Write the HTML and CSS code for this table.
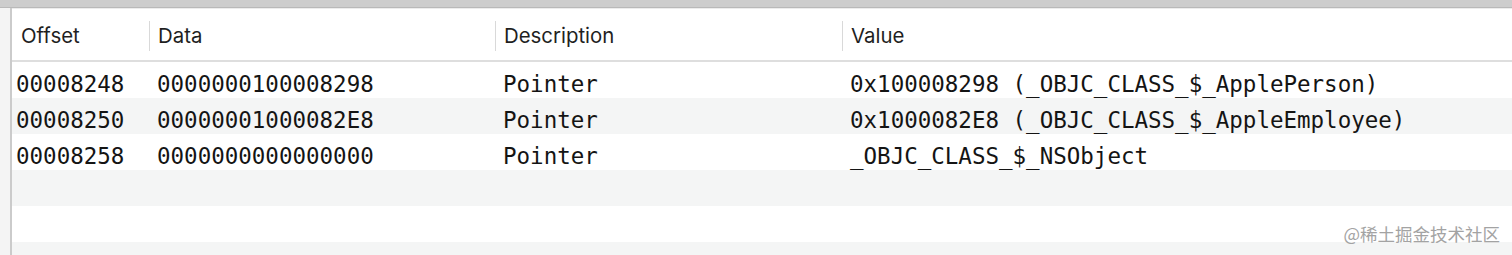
FILE: index.html
```html
<!DOCTYPE html>
<html>
<head>
<meta charset="utf-8">
<link rel="stylesheet" href="styles.css">
</head>
<body>
<div class="topbar"></div>
<div class="main">
  <div class="gutter"></div>
  <div class="table">
    <div class="head">
      <div class="hcell first">Offset</div>
      <div class="hcell">Data</div>
      <div class="hcell">Description</div>
      <div class="hcell">Value</div>
    </div>
    <div class="row">
      <div class="cell first">00008248</div>
      <div class="cell">0000000100008298</div>
      <div class="cell">Pointer</div>
      <div class="cell">0x100008298 (_OBJC_CLASS_$_ApplePerson)</div>
    </div>
    <div class="row alt">
      <div class="cell first">00008250</div>
      <div class="cell">00000001000082E8</div>
      <div class="cell">Pointer</div>
      <div class="cell">0x1000082E8 (_OBJC_CLASS_$_AppleEmployee)</div>
    </div>
    <div class="row">
      <div class="cell first">00008258</div>
      <div class="cell">0000000000000000</div>
      <div class="cell">Pointer</div>
      <div class="cell">_OBJC_CLASS_$_NSObject</div>
    </div>
    <div class="row alt"></div>
    <div class="row"></div>
    <div class="row alt"></div>
  </div>
</div>
<div class="watermark">@稀土掘金技术社区</div>
</body>
</html>
```

FILE: styles.css
```css
html, body {
  margin: 0;
  padding: 0;
  background: #ffffff;
  overflow: hidden;
}
body {
  width: 1512px;
  height: 255px;
  position: relative;
  font-family: Inter, "Noto Sans", sans-serif;
}
.topbar {
  height: 7px;
  background: #cdcdcd;
  border-bottom: 1px solid #b9b9b9;
}
.main {
  display: flex;
  height: 247px;
  overflow: hidden;
}
.gutter {
  width: 10px;
  background: #f4f4f4;
  border-right: 2px solid #cbcbcb;
  flex: none;
}
.table {
  flex: 1;
  display: flex;
  flex-direction: column;
  border-top: 1px solid #ececec;
}
.head {
  display: grid;
  grid-template-columns: 137px 346px 347px 1fr;
  height: 51px;
  flex: none;
  border-bottom: 2px solid #dedede;
}
.hcell {
  display: flex;
  align-items: center;
  font-size: 20.4px;
  color: #1f1f1f;
  padding-left: 9px;
  padding-top: 2px;
  position: relative;
}
.hcell::before {
  content: "";
  position: absolute;
  left: 0;
  top: 12px;
  height: 30px;
  width: 1px;
  background: #d9d9d9;
}
.hcell.first::before {
  display: none;
}
.row {
  display: grid;
  grid-template-columns: 137px 346px 347px 1fr;
  height: 36px;
  flex: none;
}
.row.alt {
  background: #f4f5f5;
}
.cell {
  display: flex;
  align-items: center;
  font-family: "DejaVu Sans Mono", monospace;
  font-size: 22.5px;
  color: #141414;
  padding-left: 8px;
  padding-top: 7px;
  white-space: nowrap;
}
.cell.first {
  padding-left: 4px;
}
.watermark {
  position: absolute;
  right: 12px;
  top: 221px;
  font-family: "Noto Sans CJK SC", sans-serif;
  font-size: 17.5px;
  color: #a3a3a3;
}
```
